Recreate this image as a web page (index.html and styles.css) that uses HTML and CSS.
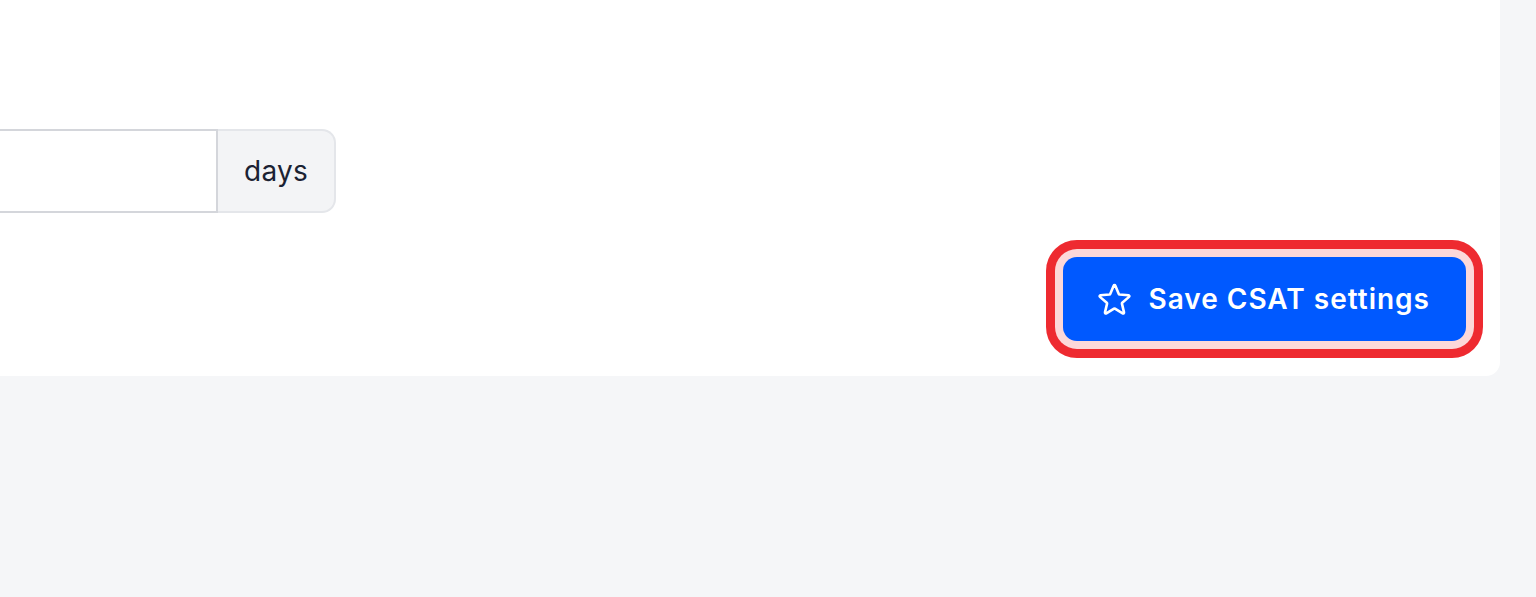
FILE: index.html
```html
<!DOCTYPE html>
<html lang="en">
<head>
<meta charset="utf-8">
<title>CSAT settings</title>
<link rel="stylesheet" href="styles.css">
</head>
<body>
  <main class="page">
    <section class="card">
      <div class="field">
        <div class="input-group">
          <input class="input" type="text" value="" aria-label="Survey delay">
          <span class="addon">days</span>
        </div>
      </div>
      <div class="actions">
        <button class="btn-primary" type="button">
          <svg class="btn-icon" viewBox="0 0 24 24" fill="none" stroke="currentColor" stroke-width="1.6" stroke-linecap="round" stroke-linejoin="round" aria-hidden="true">
            <path d="M11.48 3.499a.562.562 0 0 1 1.04 0l2.125 5.111a.563.563 0 0 0 .475.345l5.518.442c.499.04.701.663.321.988l-4.204 3.602a.563.563 0 0 0-.182.557l1.285 5.385a.562.562 0 0 1-.84.61l-4.725-2.885a.562.562 0 0 0-.586 0L6.982 20.54a.562.562 0 0 1-.84-.61l1.285-5.386a.562.562 0 0 0-.182-.557l-4.204-3.602a.562.562 0 0 1 .321-.988l5.518-.442a.563.563 0 0 0 .475-.345L11.48 3.5Z"/>
          </svg>
          <span>Save CSAT settings</span>
        </button>
      </div>
    </section>
  </main>
</body>
</html>
```

FILE: styles.css
```css
html, body {
  margin: 0;
  padding: 0;
}

body {
  background: #f5f6f8;
  font-family: Inter, "Noto Sans", "Liberation Sans", sans-serif;
  color: #1b2233;
  overflow: hidden;
}

.page {
  width: 1536px;
  height: 597px;
}

.card {
  width: 1500px;
  height: 376px;
  box-sizing: border-box;
  background: #ffffff;
  border-bottom-right-radius: 14px;
  padding: 129px 34px 0 0;
  display: flex;
  flex-direction: column;
  gap: 44px;
}

.field {
  display: flex;
}

.input-group {
  display: flex;
  height: 84px;
  margin-left: -200px;
}

.input {
  width: 418px;
  height: 84px;
  box-sizing: border-box;
  border: 2px solid #d4d6db;
  border-radius: 14px 0 0 14px;
  background: #ffffff;
  font: inherit;
  font-size: 28px;
  padding: 0 24px;
  outline: none;
}

.addon {
  display: flex;
  align-items: center;
  height: 84px;
  box-sizing: border-box;
  padding: 0 26px;
  width: 118px;
  background: #f3f4f6;
  border: 2px solid #e4e6ea;
  border-left: none;
  border-radius: 0 14px 14px 0;
  font-size: 28px;
  letter-spacing: 0.3px;
  color: #1b2233;
}

.actions {
  display: flex;
  justify-content: flex-end;
}

.btn-primary {
  display: flex;
  align-items: center;
  gap: 14px;
  height: 84px;
  padding: 0 36px 0 32px;
  border: none;
  border-radius: 14px;
  background: #0059ff;
  color: #ffffff;
  font-family: inherit;
  font-size: 28px;
  font-weight: 600;
  letter-spacing: 1px;
  box-shadow: 0 0 0 8px #fcd8d9, 0 0 0 17px #ee2a30;
  cursor: pointer;
}

.btn-icon {
  width: 39px;
  height: 39px;
  flex: none;
}
```
